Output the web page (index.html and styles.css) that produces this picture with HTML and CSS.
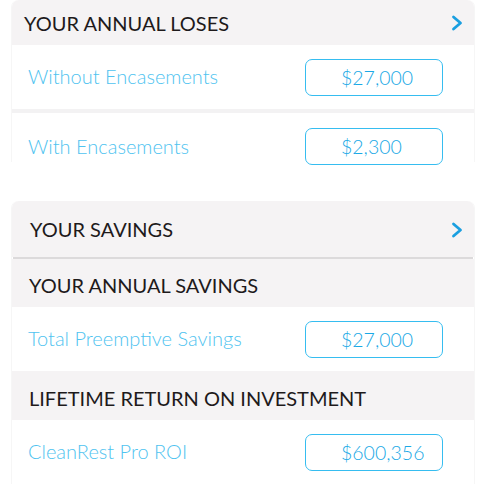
FILE: index.html
```html
<!DOCTYPE html>
<html>
<head>
<meta charset="utf-8">
<link rel="stylesheet" href="styles.css">
</head>
<body>
<div class="page">
  <section class="card card-loses">
    <div class="head head-main">
      <span class="head-title">YOUR ANNUAL LOSES</span>
      <svg class="chev" viewBox="0 0 12 16" width="12" height="16"><path d="M2.5 2 L9.5 8 L2.5 14" fill="none" stroke="#1a9fe0" stroke-width="2.8" stroke-linecap="round" stroke-linejoin="round"/></svg>
    </div>
    <div class="row">
      <span class="label">Without Encasements</span>
      <span class="value">$27,000</span>
    </div>
    <div class="sep"></div>
    <div class="row row-last">
      <span class="label">With Encasements</span>
      <span class="value">$2,300</span>
    </div>
  </section>

  <section class="card card-savings">
    <div class="head head-main head-tall">
      <span class="head-title">YOUR SAVINGS</span>
      <svg class="chev" viewBox="0 0 12 16" width="12" height="16"><path d="M2.5 2 L9.5 8 L2.5 14" fill="none" stroke="#1a9fe0" stroke-width="2.8" stroke-linecap="round" stroke-linejoin="round"/></svg>
    </div>
    <div class="line"></div>
    <div class="head head-sub">
      <span class="head-title">YOUR ANNUAL SAVINGS</span>
    </div>
    <div class="row">
      <span class="label">Total Preemptive Savings</span>
      <span class="value">$27,000</span>
    </div>
    <div class="head head-sub head-sub2">
      <span class="head-title">LIFETIME RETURN ON INVESTMENT</span>
    </div>
    <div class="row">
      <span class="label">CleanRest Pro ROI</span>
      <span class="value">$600,356</span>
    </div>
  </section>
</div>
</body>
</html>
```
FILE: styles.css
```css
html, body {
  margin: 0;
  padding: 0;
  background: #ffffff;
}
.page {
  display: flex;
  flex-direction: column;
  gap: 39px;
  padding: 0 10px 0 11px;
  font-family: Lato, "Noto Sans", sans-serif;
}
.card {
  background: #ffffff;
  border-radius: 7px 7px 0 0;
  border-left: 1px solid #f6f6f6;
  border-right: 1px solid #f6f6f6;
}
.head {
  box-sizing: border-box;
  display: flex;
  align-items: center;
  justify-content: space-between;
  background: #f5f3f4;
  color: #1e1a1b;
  font-size: 20px;
  font-weight: 400;
}
.head-main {
  height: 45px;
  padding: 0 11px 0 12px;
  border-radius: 7px 7px 0 0;
}
.card-savings .head-main {
  padding-left: 18px;
}
.head-tall {
  height: 56px;
}
.head-sub {
  height: 48px;
  padding: 4px 0 0 17px;
}
.head-sub2 {
  height: 49px;
}
.chev {
  display: block;
  margin-top: 1px;
}
.line {
  height: 2px;
  background: #dcdadb;
  margin: 0 1px;
}
.sep {
  height: 4px;
  background: #f3f2f3;
}
.row {
  box-sizing: border-box;
  display: flex;
  align-items: center;
  justify-content: space-between;
  height: 64px;
  padding: 0 31px 0 16px;
}
.row-last {
  height: 49px;
  align-items: flex-start;
  padding-top: 15px;
}
.row-last .label {
  margin-top: 6px;
}
.label {
  color: #4fc3f0;
  font-size: 20px;
  font-weight: 300;
  margin-top: -2px;
}
.value {
  box-sizing: border-box;
  flex: none;
  width: 138px;
  height: 37px;
  border: 1.5px solid #36bdf0;
  border-radius: 7px;
  padding-left: 35px;
  display: flex;
  align-items: center;
  color: #1aa9e6;
  font-size: 19.5px;
  font-weight: 300;
}
```
